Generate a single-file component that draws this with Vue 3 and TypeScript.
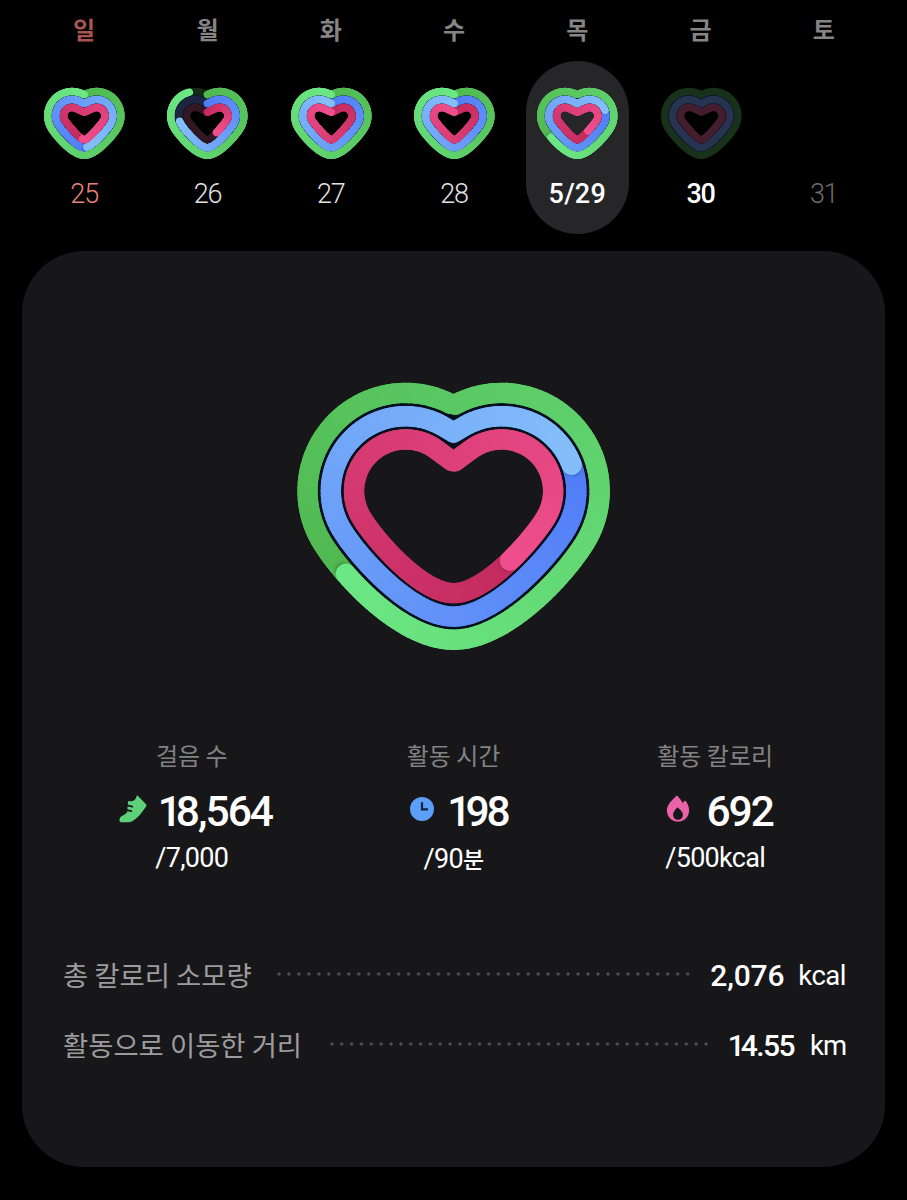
<script setup lang="ts">
type Pt = [number, number]
type RingName = 'green' | 'blue' | 'red'

interface RingShape {
  lobe: number
  notch: number
  bottom: number
  sideReach: number
  bottomReach: number
}
interface HeartShape {
  width: number
  height: number
  cx: number
  lobeX: number
  lobeY: number
  stroke: number
  gapStroke: number
  rings: Record<RingName, RingShape>
}
interface Piece {
  d: string
  color: string
}
interface Ring {
  name: RingName
  track: string
  trackColor: string
  pieces: Piece[]
  shadow: { x: number; y: number } | null
}
interface Heart {
  shape: HeartShape
  gaps: string[]
  rings: Ring[]
}
interface Day {
  weekday: string
  label: string
  kind: string
  heart: Heart | null
}

const order: RingName[] = ['green', 'blue', 'red']

const large: HeartShape = {
  width: 316,
  height: 272,
  cx: 157.6,
  lobeX: 48,
  lobeY: 111,
  stroke: 20.4,
  gapStroke: 6,
  rings: {
    green: { lobe: 98.1, notch: 25.3, bottom: 259.8, sideReach: 35, bottomReach: 55 },
    blue: { lobe: 74.8, notch: 52.5, bottom: 236.6, sideReach: 28, bottomReach: 44 },
    red: { lobe: 51.6, notch: 82.3, bottom: 213.2, sideReach: 22, bottomReach: 34 },
  },
}

const small: HeartShape = {
  width: 84,
  height: 76,
  cx: 42.3,
  lobeX: 12.3,
  lobeY: 30.8,
  stroke: 7.3,
  gapStroke: 2,
  rings: {
    green: { lobe: 24.3, notch: 9.7, bottom: 70.3, sideReach: 8, bottomReach: 12.5 },
    blue: { lobe: 16.3, notch: 18.6, bottom: 62.6, sideReach: 6, bottomReach: 8 },
    red: { lobe: 8.3, notch: 27.3, bottom: 54.7, sideReach: 4, bottomReach: 4.2 },
  },
}

const tones: Record<RingName, { from: number[]; to: number[] }> = {
  green: { from: [80, 184, 80], to: [108, 231, 133] },
  blue: { from: [80, 124, 247], to: [132, 190, 250] },
  red: { from: [194, 42, 93], to: [238, 78, 139] },
}
const partialTrack: Record<RingName, string> = { green: '#132b16', blue: '#1c2640', red: '#301721' }
const emptyTrack: Record<RingName, string> = { green: '#17311a', blue: '#28334f', red: '#451e2e' }

/** Points of one ring, clockwise from the notch and back to it. */
function outline(s: HeartShape, r: RingShape): Pt[] {
  const half: Pt[] = []
  const dy = s.lobeY - r.notch
  const dist = Math.hypot(s.lobeX, dy)
  // angle is measured clockwise from straight up, around the lobe centre
  let start = -Math.atan2(s.lobeX, dy)
  if (dist > r.lobe) {
    half.push([0, r.notch])
    start += Math.acos(r.lobe / dist)
  }
  const end = (120 * Math.PI) / 180
  for (let i = 0; i <= 60; i++) {
    const a = start + ((end - start) * i) / 60
    half.push([s.lobeX + r.lobe * Math.sin(a), s.lobeY - r.lobe * Math.cos(a)])
  }
  const [x0, y0] = half[half.length - 1]
  const x1 = x0 + r.sideReach * Math.cos(end)
  const y1 = y0 + r.sideReach * Math.sin(end)
  for (let i = 1; i <= 50; i++) {
    const t = i / 50
    const u = 1 - t
    half.push([
      u ** 3 * x0 + 3 * u * u * t * x1 + 3 * u * t * t * r.bottomReach,
      u ** 3 * y0 + 3 * u * u * t * y1 + (3 * u * t * t + t ** 3) * r.bottom,
    ])
  }
  const mirrored = half.slice(0, -1).reverse().map(([x, y]): Pt => [-x, y])
  return [...half, ...mirrored].map(([x, y]): Pt => [x + s.cx, y])
}

function toPath(points: Pt[]): string {
  return 'M' + points.map(([x, y]) => `${x.toFixed(2)} ${y.toFixed(2)}`).join('L')
}

function between(a: RingShape, b: RingShape): RingShape {
  return {
    lobe: (a.lobe + b.lobe) / 2,
    notch: (a.notch + b.notch) / 2,
    bottom: (a.bottom + b.bottom) / 2,
    sideReach: (a.sideReach + b.sideReach) / 2,
    bottomReach: (a.bottomReach + b.bottomReach) / 2,
  }
}

function sampler(points: Pt[]) {
  const lengths = [0]
  for (let i = 1; i < points.length; i++) {
    const [a, b] = [points[i - 1], points[i]]
    lengths.push(lengths[i - 1] + Math.hypot(b[0] - a[0], b[1] - a[1]))
  }
  const total = lengths[lengths.length - 1]
  return (t: number): Pt => {
    const wanted = (t === 1 ? 1 : ((t % 1) + 1) % 1) * total
    let i = 1
    while (i < lengths.length - 1 && lengths[i] < wanted) i++
    const span = lengths[i] - lengths[i - 1] || 1
    const k = (wanted - lengths[i - 1]) / span
    const [a, b] = [points[i - 1], points[i]]
    return [a[0] + (b[0] - a[0]) * k, a[1] + (b[1] - a[1]) * k]
  }
}

function makeHeart(shape: HeartShape, progress: number[], tracks: Record<RingName, string>): Heart {
  const rings = order.map((name, index): Ring => {
    const points = outline(shape, shape.rings[name])
    const at = sampler(points)
    const value = progress[index]
    const from = Math.max(0, value - 1)
    const pieces: Piece[] = []
    const count = value > 0 ? 160 : 0
    for (let i = 0; i < count; i++) {
      const k = i / (count - 1)
      const a = from + ((value - from) * i) / count
      const b = from + ((value - from) * (i + 1)) / count
      const { from: dark, to: light } = tones[name]
      const mixed = dark.map((c, n) => Math.round(c + (light[n] - c) * k))
      pieces.push({ d: toPath([at(a), at(b)]), color: `rgb(${mixed.join(',')})` })
    }
    let shadow = null
    if (value > 1) {
      const [x, y] = at(value + (shape === large ? 0.004 : 0.007))
      shadow = { x, y }
    }
    return { name, track: toPath(points) + 'Z', trackColor: tracks[name], pieces, shadow }
  })
  const { green, blue, red } = shape.rings
  const gaps = [between(green, blue), between(blue, red)].map((r) => toPath(outline(shape, r)) + 'Z')
  return { shape, gaps, rings }
}

const today = [18564 / 7000, 198 / 90, 692 / 500]
const mainHeart = makeHeart(large, today, partialTrack)

const days: Day[] = [
  { weekday: '일', label: '25', kind: 'sunday', heart: makeHeart(small, [1, 1.485, 1.52], partialTrack) },
  { weekday: '월', label: '26', kind: '', heart: makeHeart(small, [0.915, 0.735, 0.4], partialTrack) },
  { weekday: '화', label: '27', kind: '', heart: makeHeart(small, [1, 1, 1], partialTrack) },
  { weekday: '수', label: '28', kind: '', heart: makeHeart(small, [1, 1, 1], partialTrack) },
  { weekday: '목', label: '5/29', kind: 'selected', heart: makeHeart(small, today, partialTrack) },
  { weekday: '금', label: '30', kind: 'current', heart: makeHeart(small, [0, 0, 0], emptyTrack) },
  { weekday: '토', label: '31', kind: 'future', heart: null },
]

const stats = [
  { icon: 'shoe', label: '걸음 수', value: '18,564', goal: '/7,000', unit: '' },
  { icon: 'clock', label: '활동 시간', value: '198', goal: '/90', unit: '분' },
  { icon: 'flame', label: '활동 칼로리', value: '692', goal: '/500kcal', unit: '' },
]

const totals = [
  { label: '총 칼로리 소모량', value: '2,076', unit: 'kcal' },
  { label: '활동으로 이동한 거리', value: '14.55', unit: 'km' },
]
</script>

<template>
  <main class="screen">
    <section class="week">
      <div v-for="day in days" :key="day.weekday" class="day" :class="day.kind">
        <div class="weekday">{{ day.weekday }}</div>
        <div class="pill">
          <div class="mini">
            <svg
              v-if="day.heart"
              :width="day.heart.shape.width"
              :height="day.heart.shape.height"
              fill="none"
              stroke-linecap="round"
              stroke-linejoin="round"
            >
              <path
                v-for="(gap, i) in day.heart.gaps"
                :key="i"
                :d="gap"
                stroke="#0a1230"
                :stroke-width="day.heart.shape.gapStroke"
              />
              <g v-for="ring in day.heart.rings" :key="ring.name">
                <path :d="ring.track" :stroke="ring.trackColor" :stroke-width="day.heart.shape.stroke" />
                <template v-for="(piece, i) in ring.pieces" :key="i">
                  <circle
                    v-if="ring.shadow && i === ring.pieces.length - 1"
                    :cx="ring.shadow.x"
                    :cy="ring.shadow.y"
                    r="3.6"
                    fill="#000"
                    opacity="0.14"
                  />
                  <path :d="piece.d" :stroke="piece.color" :stroke-width="day.heart.shape.stroke" />
                </template>
              </g>
            </svg>
          </div>
          <div class="date">{{ day.label }}</div>
        </div>
      </div>
    </section>

    <section class="card">
      <svg
        class="heart"
        :width="mainHeart.shape.width"
        :height="mainHeart.shape.height"
        fill="none"
        stroke-linecap="round"
        stroke-linejoin="round"
      >
        <defs>
          <filter id="soft" x="-50%" y="-50%" width="200%" height="200%">
            <feGaussianBlur stdDeviation="1.6" />
          </filter>
        </defs>
        <path
          v-for="(gap, i) in mainHeart.gaps"
          :key="i"
          :d="gap"
          stroke="#06101f"
          :stroke-width="mainHeart.shape.gapStroke"
        />
        <g v-for="ring in mainHeart.rings" :key="ring.name">
          <template v-for="(piece, i) in ring.pieces" :key="i">
            <circle
              v-if="ring.shadow && i === ring.pieces.length - 1"
              :cx="ring.shadow.x"
              :cy="ring.shadow.y"
              r="8.4"
              fill="#000"
              opacity="0.25"
              filter="url(#soft)"
            />
            <path :d="piece.d" :stroke="piece.color" :stroke-width="mainHeart.shape.stroke" />
          </template>
        </g>
      </svg>

      <div class="stats">
        <div v-for="stat in stats" :key="stat.icon" class="stat">
          <div class="stat-label">{{ stat.label }}</div>
          <div class="stat-main" :class="stat.icon">
            <span class="icon">
              <svg v-if="stat.icon === 'shoe'" width="28" height="28" viewBox="0 0 28 28">
                <path
                  fill="#5fd07a"
                  d="M17.600 1.200C17.800.4 18.500.3 19 .9L27 9.300C27.600 10 27.600 10.700 27.100 11.400L22.700 17.600C19.800 21.500 17 24.400 13.200 26.300C11.900 27 10.600 27.300 9.200 27.300H2.800C1.300 27.300.4 26.400.5 24.900C.6 22.900 1.500 21.500 3.300 20.700C5.300 19.900 6.900 18.800 8.200 17.200L9 6.900C9.100 6.200 9.600 5.900 10.300 6.100C13.800 7 16.900 4.800 17.600 1.200Z"
                />
                <path d="M7 10.100L13.300 11.700M6 14.600L12.300 16.200" stroke="#17171a" stroke-width="1.800" stroke-linecap="round" />
              </svg>
              <svg v-else-if="stat.icon === 'clock'" width="28" height="28" viewBox="0 0 28 28">
                <circle cx="14" cy="14" r="12" fill="#5b9ff8" />
                <path d="M14 7.300V14.400H20" fill="none" stroke="#15223c" stroke-width="2.200" />
              </svg>
              <svg v-else width="28" height="28" viewBox="0 0 28 28">
                <path
                  fill="#ea62a8"
                  fill-rule="evenodd"
                  d="M12 1.200c.5-.5 1.200-.5 1.700 0 1.800 1.900 3.600 4.200 5 6.700.6-.8 1.100-1.500 1.700-2 .5-.4 1-.3 1.400.2 2 2.700 3.300 6 3.300 9.300 0 6.300-4.900 11.200-11.100 11.200S2.900 21.700 2.900 15.400C2.900 10.200 7 5.800 12 1.200zM14 12.700c-.3-.3-.7-.3-1 0-2.300 2.500-3.900 4.600-3.900 7 0 3 2.200 5 4.900 5s4.900-2 4.900-5c0-2.400-2.100-4.500-4.900-7z"
                />
              </svg>
            </span>
            <span class="stat-value"><span v-for="(ch, i) in stat.value" :key="i" :class="{ one: ch === '1' }">{{ ch }}</span></span>
          </div>
          <div class="goal">{{ stat.goal }}<span v-if="stat.unit" class="goal-unit">{{ stat.unit }}</span></div>
        </div>
      </div>

      <div class="totals">
        <div v-for="total in totals" :key="total.unit" class="total" :class="total.unit">
          <span class="total-label">{{ total.label }}</span>
          <span class="dots"></span>
          <span class="total-value"><span v-for="(ch, i) in total.value" :key="i" :class="{ one: ch === '1' }">{{ ch }}</span></span>
          <span class="total-unit">{{ total.unit }}</span>
        </div>
      </div>
    </section>
  </main>
</template>

<style>
html,
body {
  margin: 0;
  background: #000;
}
</style>

<style scoped>
.screen {
  box-sizing: border-box;
  width: 907px;
  height: 1200px;
  overflow: hidden;
  background: #000;
  color: #fff;
  font-family: Roboto, 'Noto Sans CJK KR', sans-serif;
}
.week {
  display: grid;
  grid-template-columns: repeat(7, 1fr);
  height: 251px;
  padding: 0 21.500px 0 22.500px;
}
.day {
  display: flex;
  flex-direction: column;
  align-items: center;
}
.weekday {
  height: 61px;
  line-height: 58px;
  font-family: 'Noto Sans CJK KR', sans-serif;
  font-size: 24px;
  font-weight: 700;
  color: #858585;
}
.sunday .weekday {
  color: #a85450;
}
.pill {
  display: flex;
  flex-direction: column;
  align-items: center;
  width: 103px;
  height: 172.500px;
  border-radius: 52px;
}
.selected .pill {
  background: #262628;
}
.mini {
  width: 84px;
  height: 76px;
  margin-top: 24px;
}
.mini svg {
  display: block;
}
.date {
  margin-top: 17px;
  line-height: 32px;
  font-size: 27px;
  font-weight: 300;
  letter-spacing: -1.200px;
  color: #e2e2e2;
}
.sunday .date {
  color: #ea827b;
}
.selected .date,
.current .date {
  font-weight: 500;
  color: #fff;
}
.selected .date {
  letter-spacing: 0.2px;
}
.future .date {
  color: #6c6c6c;
}
.card {
  display: flex;
  flex-direction: column;
  align-items: center;
  box-sizing: border-box;
  width: 863px;
  height: 916px;
  margin-left: 22px;
  padding: 129px 39px 0;
  border-radius: 62px;
  background: #17171a;
}
.heart {
  display: block;
  flex: none;
}
.stats {
  display: grid;
  grid-template-columns: repeat(3, 1fr);
  width: 785px;
  margin-top: 85px;
}
.stat {
  display: flex;
  flex-direction: column;
  align-items: center;
}
.stat-label {
  height: 36px;
  line-height: 36px;
  font-family: 'Noto Sans CJK KR', sans-serif;
  font-size: 24px;
  font-weight: 400;
  color: #838386;
}
.stat-main {
  display: flex;
  align-items: center;
  gap: 14px;
  height: 48px;
  margin-top: 15px;
  padding-left: 7px;
}
.stat-main.clock {
  padding-left: 9px;
}
.stat-main.clock .stat-value {
  letter-spacing: -3px;
}
.icon {
  display: block;
  width: 28px;
  height: 28px;
  margin-bottom: 7px;
}
.icon svg {
  display: block;
}
.stat-value {
  font-size: 42.500px;
  font-weight: 500;
  line-height: 50px;
  letter-spacing: -2px;
}
.stat-value .one {
  margin-left: -3px;
  letter-spacing: -6px;
}
.goal {
  height: 36px;
  margin-top: 4px;
  line-height: 36px;
  font-size: 27px;
  font-weight: 400;
  letter-spacing: -0.7px;
  white-space: nowrap;
}
.goal-unit {
  font-family: 'Noto Sans CJK KR', sans-serif;
  font-size: 23px;
  font-weight: 500;
}
.totals {
  width: 783px;
  margin-top: 64px;
  padding-left: 2px;
}
.total {
  display: flex;
  align-items: center;
  height: 70px;
}
.total-label {
  margin-bottom: 2px;
  font-family: 'Noto Sans CJK KR', sans-serif;
  font-size: 27.400px;
  font-weight: 400;
  color: #9c9c9f;
}
.dots {
  flex: 1;
  height: 4px;
  margin: 0 17px 3px 22px;
  background: radial-gradient(circle at 50% 50%, #505053 1.300px, transparent 1.900px) 0 0 / 9.930px 4px round;
}
.km .dots {
  margin-left: 25px;
}
.total-value {
  font-size: 30px;
  font-weight: 500;
  letter-spacing: -0.2px;
}
.km .total-value {
  letter-spacing: -1.600px;
}
.total-value .one {
  letter-spacing: -4px;
}
.total-unit {
  margin-left: 14px;
  font-size: 27.500px;
  font-weight: 400;
  letter-spacing: -0.5px;
}
.km .total-unit {
  margin-left: 16px;
  letter-spacing: -1px;
}
</style>
